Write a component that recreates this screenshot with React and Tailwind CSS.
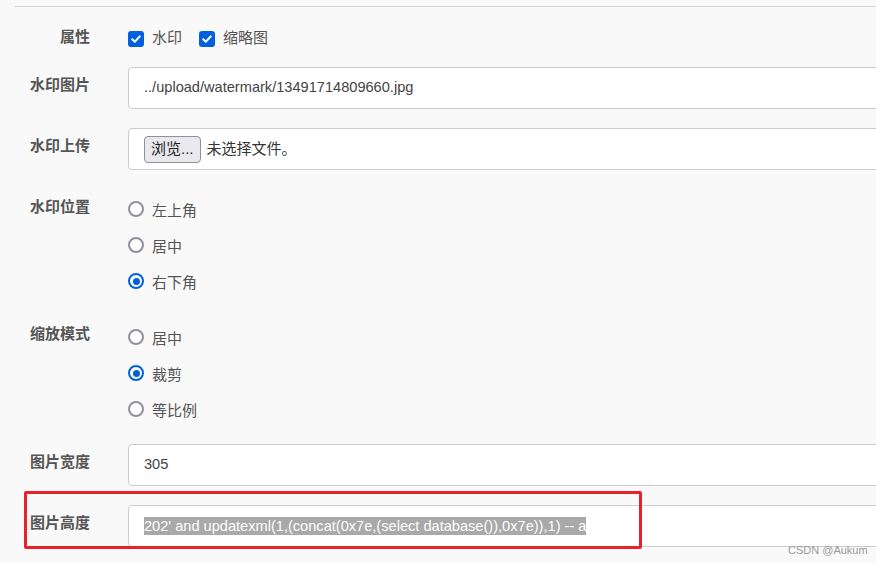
import React from "react";

const font = { fontFamily: '"Liberation Sans", Arial, "Noto Sans CJK SC", sans-serif' };

function Label({ children, pt }) {
  return (
    <div className={`w-[76px] shrink-0 text-right text-[15px] leading-5 font-bold text-[#555] ${pt}`}>
      {children}
    </div>
  );
}

function Checkbox({ children }) {
  return (
    <label className="flex items-center h-5 mr-[17px]">
      <span className="w-4 h-4 mt-1 rounded-[3px] bg-[#0060df] flex items-center justify-center">
        <svg width="12" height="12" viewBox="0 0 12 12">
          <path d="M2.2 6.3 L4.8 8.8 L9.8 3.4" fill="none" stroke="white" strokeWidth="2" strokeLinecap="round" strokeLinejoin="round" />
        </svg>
      </span>
      <span className="ml-2 mt-[2px] text-[15px] text-[#555]">{children}</span>
    </label>
  );
}

function Radio({ children, checked }) {
  return (
    <label className="flex items-center h-9">
      {checked ? (
        <span className="w-4 h-4 rounded-full border-2 border-[#0060df] bg-white flex items-center justify-center">
          <span className="w-[7px] h-[7px] rounded-full bg-[#0060df]" />
        </span>
      ) : (
        <span className="w-4 h-4 rounded-full border-2 border-[#8f8f9d] bg-white" />
      )}
      <span className="ml-2 mt-1 text-[15px] text-[#555]">{children}</span>
    </label>
  );
}

function Box({ children }) {
  return (
    <div className="flex items-center h-[42px] w-[780px] shrink-0 bg-white border border-[#cccccc] rounded-[4px] pl-[15px] text-[14.6px] text-[#444]">
      {children}
    </div>
  );
}

export default function App() {
  return (
    <div className="relative w-[876px] h-[563px] overflow-hidden bg-[#f9f9f9]" style={font}>
      <div className="ml-[15px] mt-[6px] h-px bg-[#d2d2d2]" />

      <div className="pl-[14px]">
        <div className="flex mt-5">
          <Label pt="pt-0">属性</Label>
          <div className="flex ml-[38px]">
            <Checkbox>水印</Checkbox>
            <Checkbox>缩略图</Checkbox>
          </div>
        </div>

        <div className="flex mt-5">
          <Label pt="pt-2">水印图片</Label>
          <div className="ml-[38px]">
            <Box>../upload/watermark/13491714809660.jpg</Box>
          </div>
        </div>

        <div className="flex mt-[19px]">
          <Label pt="pt-2">水印上传</Label>
          <div className="ml-[38px]">
            <Box>
              <span className="h-[27px] px-[6px] flex items-center bg-[#e9e9ed] border border-[#8f8f9d] rounded-[4px] text-[15px] text-[#222]">
                浏览...
              </span>
              <span className="ml-[6px] text-[15px] text-[#333]">未选择文件。</span>
            </Box>
          </div>
        </div>

        <div className="flex mt-[21px]">
          <Label pt="pt-[6px]">水印位置</Label>
          <div className="ml-[38px] flex flex-col">
            <Radio>左上角</Radio>
            <Radio>居中</Radio>
            <Radio checked>右下角</Radio>
          </div>
        </div>

        <div className="flex mt-5">
          <Label pt="pt-[5px]">缩放模式</Label>
          <div className="ml-[38px] flex flex-col">
            <Radio>居中</Radio>
            <Radio checked>裁剪</Radio>
            <Radio>等比例</Radio>
          </div>
        </div>

        <div className="flex mt-[17px]">
          <Label pt="pt-2">图片宽度</Label>
          <div className="ml-[38px]">
            <Box>305</Box>
          </div>
        </div>

        <div className="flex mt-[19px]">
          <Label pt="pt-2">图片高度</Label>
          <div className="ml-[38px]">
            <Box>
              <span className="bg-[#a9a9a9] text-white leading-[18px]">
                202' and updatexml(1,(concat(0x7e,(select database()),0x7e)),1) -- a
              </span>
            </Box>
          </div>
        </div>
      </div>

      <div className="absolute left-[24px] top-[491px] w-[618px] h-[58px] border-[3px] border-[#e8212b] rounded-[2px]" />
      <div className="absolute left-[788px] top-[542px] text-[11px] text-[#9a9a9a]">CSDN @Aukum</div>
    </div>
  );
}
